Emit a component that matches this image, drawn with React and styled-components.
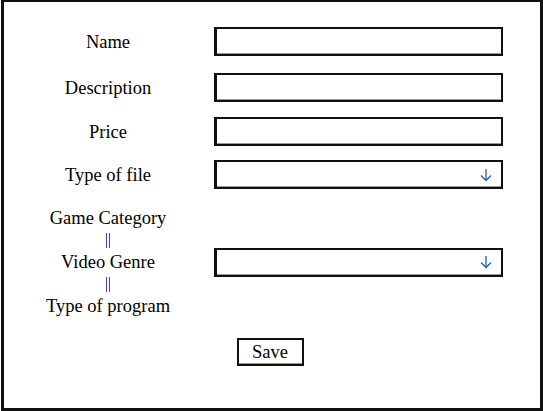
import React from "react";
import styled, { createGlobalStyle } from "styled-components";

const Global = createGlobalStyle`
  html, body { margin: 0; padding: 0; background: #fff; }
  body { font-family: "Liberation Serif", "Times New Roman", serif; color: #000; }
  * { box-sizing: border-box; }
`;

const Frame = styled.div`
  width: 542px;
  height: 411px;
  margin-left: 1px;
  border: 3px solid #111;
  border-top-width: 2px;
  display: flex;
  flex-direction: column;
  padding-top: 25px;
  font-family: "Liberation Serif", "Times New Roman", serif;
  font-size: 18.5px;
`;

const Row = styled.div`
  display: grid;
  grid-template-columns: 208px 289px;
  column-gap: 2px;
  align-items: center;
  margin-top: ${(p) => p.$top || 0}px;
`;

const Label = styled.div`
  text-align: center;
  line-height: 22px;
`;

const Stack = styled.div`
  display: flex;
  flex-direction: column;
  align-items: center;
  line-height: 22px;
`;

const Sep = styled.span`
  display: block;
  width: 4px;
  height: 15px;
  margin: 4px 0 3px;
  border-left: 1px solid #7030a0;
  border-right: 1px solid #7030a0;
`;

const Field = styled.div`
  height: 29px;
  border: 2px solid #111;
  border-left-width: 3px;
  box-shadow: inset 0 -1px 0 #999;
  background: #fff;
  display: flex;
  align-items: center;
  justify-content: flex-end;
  padding-right: 9px;
`;

const ArrowIcon = () => (
  <svg width="12" height="14" viewBox="0 0 12 14" fill="none" stroke="#1f5fb8" strokeWidth="1.3">
    <path d="M6 1 V12.5" />
    <path d="M1 7.5 L6 12.5 L11 7.5" />
  </svg>
);

const Footer = styled.div`
  display: flex;
  justify-content: center;
  padding-right: 4px;
  margin-top: 21px;
`;

const Button = styled.div`
  width: 67px;
  height: 28px;
  border: 2px solid #111;
  box-shadow: inset 0 -1px 0 #999;
  display: flex;
  align-items: center;
  justify-content: center;
  background: #fff;
`;

export default function App() {
  return (
    <>
      <Global />
      <Frame>
        <Row>
          <Label>Name</Label>
          <Field />
        </Row>
        <Row $top={17}>
          <Label>Description</Label>
          <Field />
        </Row>
        <Row $top={15}>
          <Label>Price</Label>
          <Field />
        </Row>
        <Row $top={14}>
          <Label>Type of file</Label>
          <Field>
            <ArrowIcon />
          </Field>
        </Row>
        <Row $top={18}>
          <Stack>
            <span>Game Category</span>
            <Sep />
            <span>Video Genre</span>
            <Sep />
            <span>Type of program</span>
          </Stack>
          <Field>
            <ArrowIcon />
          </Field>
        </Row>
        <Footer>
          <Button>Save</Button>
        </Footer>
      </Frame>
    </>
  );
}
